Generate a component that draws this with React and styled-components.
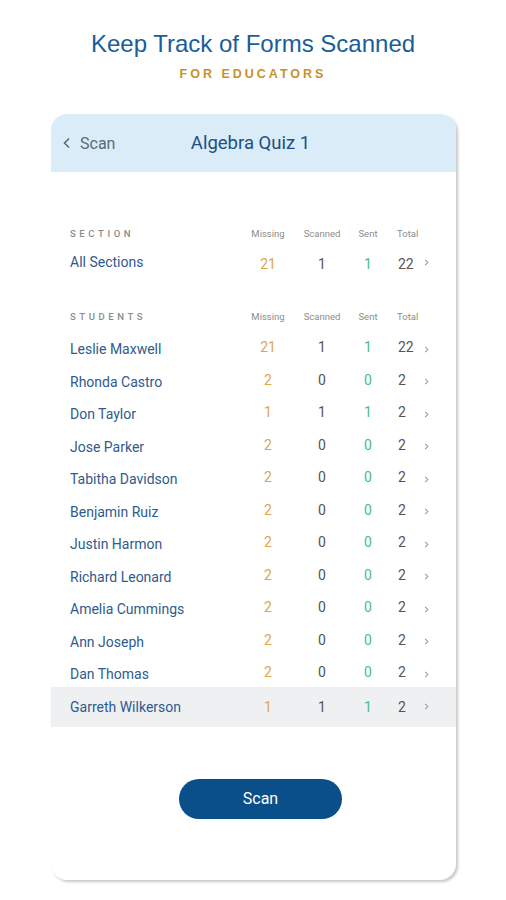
import React from "react"
import styled, { createGlobalStyle } from "styled-components"

const Global = createGlobalStyle`
    body {
        margin: 0;
        background: #ffffff;
        font-family: Roboto, "Liberation Sans", sans-serif;
    }
`

const Page = styled.main`
    width: 506px;
    height: 900px;
    display: flex;
    flex-direction: column;
    align-items: center;
    padding-top: 29px;
    box-sizing: border-box;
`
const Heading = styled.h1`
    margin: 0;
    font-family: "Liberation Sans", Arial, sans-serif;
    font-weight: 400;
    font-size: 24px;
    line-height: 30px;
    color: #1b5d97;
`
const Sub = styled.h2`
    margin: 2px 0 0 0;
    font-family: "Liberation Sans", Arial, sans-serif;
    font-weight: 700;
    font-size: 12.5px;
    letter-spacing: 3px;
    line-height: 26px;
    color: #c8922a;
`
const Card = styled.section`
    margin-top: 27px;
    margin-left: 1px;
    width: 405px;
    height: 766px;
    border-radius: 16px;
    background: #fff;
    box-shadow: 2px 2px 3px rgba(0, 0, 0, 0.22);
    overflow: hidden;
    display: flex;
    flex-direction: column;
`
const Header = styled.header`
    height: 58px;
    background: #d9ecf7;
    display: grid;
    grid-template-columns: 1fr auto 1fr;
    align-items: center;
    padding: 0 10px;
`
const Back = styled.div`
    display: flex;
    align-items: center;
    gap: 7px;
    color: #5b6a78;
    font-size: 16px;
    svg { width: 12px; height: 12px; }
`
const HeaderTitle = styled.div`
    color: #1e4f87;
    font-size: 18.5px;
    text-align: center;
    margin-left: -6px;
`
const Body = styled.div`
    padding-top: 54px;
    display: flex;
    flex-direction: column;
`
const Grid = styled.div`
    display: grid;
    grid-template-columns: 171px 54px 54px 38px 36px 14px;
    padding-left: 19px;
    align-items: center;
    height: ${(p) => p.$h || 32.5}px;
    margin-top: ${(p) => p.$mt || 0}px;
    background: ${(p) => (p.$active ? "#eef0f2" : "transparent")};
`
const Label = styled.div`
    font-size: 9.5px;
    letter-spacing: 3.6px;
    color: #8b8b8b;
    font-weight: 500;
`
const ColHead = styled.div`
    font-size: 9.5px;
    color: #8b8b8b;
    text-align: ${(p) => (p.$left ? "left" : "center")};
    padding-left: ${(p) => (p.$left ? 10 : 0)}px;
`
const Name = styled.div`
    font-size: 14px;
    color: #2f5b8d;
`
const Num = styled.div`
    font-size: 14px;
    color: ${(p) => p.$color || "#555"};
    text-align: ${(p) => (p.$left ? "left" : "center")};
    padding-left: ${(p) => (p.$left ? 11 : 0)}px;
    margin-top: ${(p) => p.$lift}px;
`
const Chev = styled.div`
    color: #999;
    display: flex;
    align-items: center;
    svg { width: 7px; height: 7px; }
`
const Button = styled.button`
    margin: 52px 0 0 128px;
    width: 163px;
    height: 40px;
    border: none;
    border-radius: 20px;
    background: #0b4f8a;
    color: #fff;
    font-family: Roboto, sans-serif;
    font-size: 16px;
    font-weight: 400;
`

const ORANGE = "#e0a54a"
const GREEN = "#4dbb85"

const students = [
    ["Leslie Maxwell", 21, 1, 1, 22],
    ["Rhonda Castro", 2, 0, 0, 2],
    ["Don Taylor", 1, 1, 1, 2],
    ["Jose Parker", 2, 0, 0, 2],
    ["Tabitha Davidson", 2, 0, 0, 2],
    ["Benjamin Ruiz", 2, 0, 0, 2],
    ["Justin Harmon", 2, 0, 0, 2],
    ["Richard Leonard", 2, 0, 0, 2],
    ["Amelia Cummings", 2, 0, 0, 2],
    ["Ann Joseph", 2, 0, 0, 2],
    ["Dan Thomas", 2, 0, 0, 2],
    ["Garreth Wilkerson", 1, 1, 1, 2],
]

const Chevron = () => (
    <Chev>
        <svg viewBox="0 0 8 8" fill="none" stroke="#999" strokeWidth="1.2">
            <path d="M2.5 1 L5.5 4 L2.5 7" />
        </svg>
    </Chev>
)

const Heads = ({ label }) => (
    <Grid $h={14}>
        <Label>{label}</Label>
        <ColHead>Missing</ColHead>
        <ColHead>Scanned</ColHead>
        <ColHead>Sent</ColHead>
        <ColHead $left>Total</ColHead>
        <div />
    </Grid>
)

const Row = ({ name, m, sc, se, t, active, h, mt, lift }) => (
    <Grid $active={active} $h={h} $mt={mt}>
        <Name>{name}</Name>
        <Num $color={ORANGE} $lift={lift}>{m}</Num>
        <Num $lift={lift}>{sc}</Num>
        <Num $color={GREEN} $lift={lift}>{se}</Num>
        <Num $left $lift={lift}>{t}</Num>
        <Chevron />
    </Grid>
)

export default function App() {
    return (
        <Page>
            <Global />
            <Heading>Keep Track of Forms Scanned</Heading>
            <Sub>FOR EDUCATORS</Sub>
            <Card>
                <Header>
                    <Back>
                        <svg viewBox="0 0 12 12" fill="none" stroke="#5b6a78" strokeWidth="1.6">
                            <path d="M8 1.5 L3.5 6 L8 10.5" />
                        </svg>
                        Scan
                    </Back>
                    <HeaderTitle>Algebra Quiz 1</HeaderTitle>
                    <div />
                </Header>
                <Body>
                    <Heads label="SECTION" />
                    <Row name="All Sections" m={21} sc={1} se={1} t={22} h={30} mt={7} lift={3} />
                    <div style={{ height: 32 }} />
                    <Heads label="STUDENTS" />
                    <div style={{ height: 10 }} />
                    {students.map(([name, m, sc, se, t], i) => {
                        const last = i === students.length - 1
                        return (
                            <Row
                                key={name}
                                name={name}
                                m={m}
                                sc={sc}
                                se={se}
                                t={t}
                                active={last}
                                h={last ? 40 : 32.5}
                                mt={last ? -4 : 0}
                                lift={last ? 0 : -4}
                            />
                        )
                    })}
                    <Button>Scan</Button>
                </Body>
            </Card>
        </Page>
    )
}
